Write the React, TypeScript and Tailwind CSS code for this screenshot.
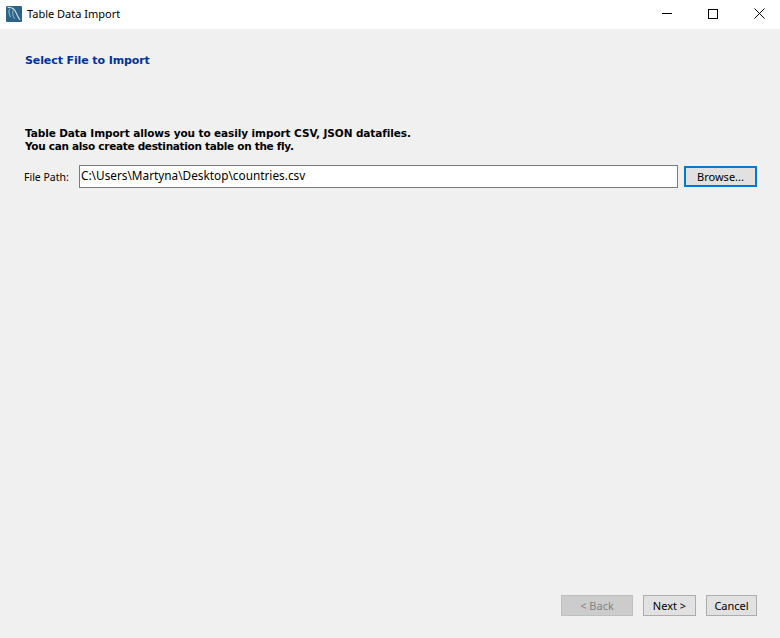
function LogoIcon() {
  return (
    <svg width="16" height="16" viewBox="0 0 16 16" className="shrink-0">
      <rect width="16" height="16" rx="1" fill="#2b6488" />
      <path d="M1.500 1.500c4-.5 7.500 2 9 6 .7 2 1.700 4 3.500 6.500" fill="none" stroke="#c3d6e1" strokeWidth="1.200" />
      <path d="M3.500 3c-1 2.500-.5 5.500 1 8M7 4.500c-.8 2.500-.2 5.500 1.500 8" fill="none" stroke="#a4c0d0" strokeWidth="1" />
    </svg>
  )
}

export default function App() {
  return (
    <div className="w-[780px] h-[638px] flex flex-col bg-[#f0f0f0] overflow-hidden font-['Noto_Sans','DejaVu_Sans',sans-serif] text-black">
      {/* Title bar */}
      <div className="h-[29px] bg-white flex items-start">
        <div className="ml-[6px] mt-[6px]">
          <LogoIcon />
        </div>
        <span className="ml-[5px] mt-[7px] text-[11px] leading-[13px]">Table Data Import</span>
        <div className="ml-auto -mr-[2px] flex items-center">
          <div className="w-[46px] h-[27px] flex items-center justify-center">
            <div className="w-[10px] h-px bg-black" />
          </div>
          <div className="w-[46px] h-[27px] flex items-center justify-center">
            <div className="w-[10px] h-[10px] border border-black" />
          </div>
          <div className="w-[46px] h-[27px] flex items-center justify-center">
            <svg width="11" height="11" viewBox="0 0 11 11">
              <path d="M.5.5l10 10M10.500.5l-10 10" stroke="#000" strokeWidth="1" fill="none" />
            </svg>
          </div>
        </div>
      </div>

      {/* Body */}
      <div className="flex-1 flex flex-col pl-[25px] pr-[23px] pb-[22px]">
        <h1 className="mt-[24px] h-[16px] leading-[16px] text-[11px] tracking-[-0.1px] font-bold text-[#003399] font-['DejaVu_Sans',sans-serif]">Select File to Import</h1>

        <p className="mt-[58px] text-[10.500px] leading-[13px] font-bold font-['DejaVu_Sans',sans-serif]">
          <span className="tracking-[-0.09px]">Table Data Import allows you to easily import CSV, JSON datafiles.</span>
          <br />
          <span className="tracking-[-0.3px]">You can also create destination table on the fly.</span>
        </p>

        <div className="mt-[12px] flex items-center h-[23px] -ml-px">
          <span className="w-[55px] text-[10.500px] leading-[13px] mt-[2px]">File Path:</span>
          <div className="w-[599px] h-[23px] bg-white border border-[#7a7a7a] flex items-center pl-px pb-px text-[11.800px] leading-none">
            C:\Users\Martyna\Desktop\countries.csv
          </div>
          <button className="ml-[6px] w-[73px] h-[21px] bg-[#e1e1e1] border-2 border-[#0078d7] text-[11px] leading-none">
            Browse...
          </button>
        </div>

        <div className="mt-auto flex justify-end">
          <button className="w-[72px] h-[21px] bg-[#cccccc] border border-[#bfbfbf] text-[11px] text-[#838383] leading-none">
            &lt; Back
          </button>
          <button className="ml-[10px] w-[53px] h-[21px] bg-[#e1e1e1] border border-[#adadad] text-[11px] leading-none">
            Next &gt;
          </button>
          <button className="ml-[10px] w-[51px] h-[21px] bg-[#e1e1e1] border border-[#adadad] text-[11px] leading-none">
            Cancel
          </button>
        </div>
      </div>
    </div>
  )
}
